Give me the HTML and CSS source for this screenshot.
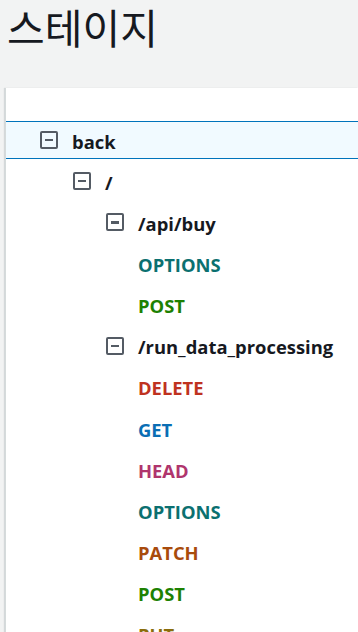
FILE: index.html
```html
<!DOCTYPE html>
<html lang="ko">
<head>
  <meta charset="UTF-8">
  <meta name="viewport" content="width=device-width, initial-scale=1.0">
  <title>스테이지</title>
  <link rel="stylesheet" href="styles.css">
</head>
<body>
  <h1 class="page-title">스테이지</h1>

  <div class="panel">
    <div class="panel-header"></div>
    <ul class="tree">
      <li class="node selected level-0">
        <span class="toggle"></span>
        <span class="label">back</span>
      </li>
      <li class="node level-1">
        <span class="toggle"></span>
        <span class="label">/</span>
      </li>
      <li class="node level-2">
        <span class="toggle"></span>
        <span class="label">/api/buy</span>
      </li>
      <li class="node leaf"><span class="method options">OPTIONS</span></li>
      <li class="node leaf"><span class="method post">POST</span></li>
      <li class="node level-2">
        <span class="toggle"></span>
        <span class="label">/run_data_processing</span>
      </li>
      <li class="node leaf"><span class="method delete">DELETE</span></li>
      <li class="node leaf"><span class="method get">GET</span></li>
      <li class="node leaf"><span class="method head">HEAD</span></li>
      <li class="node leaf"><span class="method options">OPTIONS</span></li>
      <li class="node leaf"><span class="method patch">PATCH</span></li>
      <li class="node leaf"><span class="method post">POST</span></li>
      <li class="node leaf"><span class="method put">PUT</span></li>
    </ul>
  </div>
</body>
</html>
```

FILE: styles.css
```css
body {
  margin: 0;
  background: #f2f3f3;
  color: #16191f;
  font-family: "Open Sans", "Noto Sans", "Noto Sans CJK KR", sans-serif;
  height: 632px;
  overflow: hidden;
}
.page-title {
  margin: 0;
  padding: 0 7px;
  height: 88px;
  font-family: "Noto Sans CJK KR", sans-serif;
  font-size: 41px;
  font-weight: 400;
  line-height: 52px;
  color: #16191f;
}
.panel {
  margin-left: 5px;
  background: #fff;
  border-left: 1px solid #d5dbdb;
  box-shadow: -1px 0 1px rgba(0, 22, 43, 0.12);
  min-height: 600px;
}
.panel-header {
  height: 33px;
}
.tree {
  list-style: none;
  margin: 0;
  padding: 0;
}
.node {
  display: flex;
  align-items: center;
  box-sizing: border-box;
  height: 38px;
  margin-bottom: 3.17px;
  padding-top: 2px;
  border-top: 1px solid transparent;
  border-bottom: 1px solid transparent;
  font-size: 18.4px;
  font-weight: 700;
  white-space: nowrap;
}
.node.selected {
  background: #f1faff;
  border-color: #0073bb;
}
.level-0 { padding-left: 34px; }
.level-1 { padding-left: 67px; }
.level-2 { padding-left: 100px; }
.leaf { padding-left: 132px; }
.toggle {
  position: relative;
  box-sizing: border-box;
  width: 18px;
  height: 18px;
  margin-top: -2px;
  margin-right: 14px;
  border: 2.5px solid #545b64;
  border-radius: 2px;
  flex-shrink: 0;
}
.toggle::after {
  content: "";
  position: absolute;
  left: 3px;
  right: 3px;
  top: 50%;
  height: 2.5px;
  margin-top: -1.25px;
  background: #545b64;
}
.label {
  color: #16191f;
}
.method.options { color: #0b7070; }
.method.post { color: #1d8102; }
.method.delete { color: #bf3220; }
.method.get { color: #0a6eb4; }
.method.head { color: #b0356d; }
.method.patch { color: #a84b0c; }
.method.put { color: #8a6d0b; }
```
